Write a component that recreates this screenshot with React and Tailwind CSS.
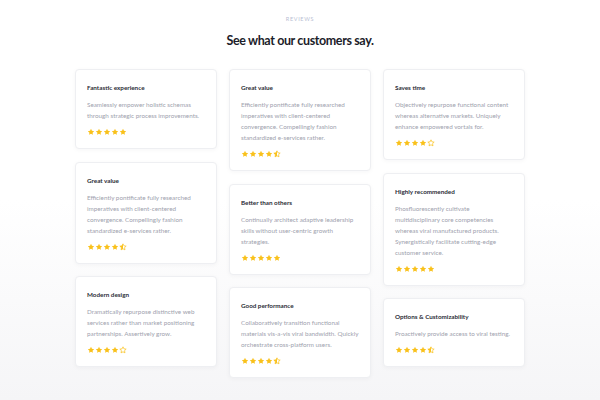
import React from 'react'

// Star glyph: full, half or empty
function Star({ kind, id }) {
  const d =
    'M12 2.5l2.9 6.1 6.6.8-4.9 4.6 1.3 6.6L12 17.3l-5.9 3.3 1.3-6.6-4.9-4.6 6.6-.8L12 2.5z'
  return (
    <svg viewBox="0 0 24 24" className="w-[8px] h-[8px]">
      {kind === 'half' && (
        <clipPath id={id}>
          <rect x="0" y="0" width="12" height="24" />
        </clipPath>
      )}
      {kind === 'full' && <path d={d} fill="#f9c11b" />}
      {kind === 'half' && <path d={d} fill="#f9c11b" clipPath={`url(#${id})`} />}
      {kind !== 'full' && (
        <path d={d} fill="none" stroke="#f9c11b" strokeWidth="2.2" strokeLinejoin="round" />
      )}
    </svg>
  )
}

function Rating({ value, uid }) {
  const stars = []
  for (let i = 1; i <= 5; i++) {
    let kind = 'empty'
    if (value >= i) kind = 'full'
    else if (value >= i - 0.5) kind = 'half'
    stars.push(<Star key={i} kind={kind} id={`${uid}-${i}`} />)
  }
  return <div className="flex items-center mt-[7px] h-[8px]">{stars}</div>
}

function ReviewCard({ review }) {
  return (
    <div className="bg-white rounded-[4px] border border-[#eeeff2] shadow-[0_1px_4px_rgba(20,20,40,0.04)] pt-[12px] pb-[12px] px-[11px]">
      <h3 className="text-[6.3px] leading-[11px] font-bold text-[#2b2c36]">{review.title}</h3>
      <p className="mt-[6px] text-[6.3px] leading-[11px] text-[#a0a2ae]">{review.text}</p>
      <Rating value={review.rating} uid={review.id} />
    </div>
  )
}

export default function App() {
  const columns = [
    [
      {
        id: 'a1',
        title: 'Fantastic experience',
        text: 'Seamlessly empower holistic schemas through strategic process improvements.',
        rating: 5,
      },
      {
        id: 'a2',
        title: 'Great value',
        text: 'Efficiently pontificate fully researched imperatives with client-centered convergence. Compellingly fashion standardized e-services rather.',
        rating: 4.5,
      },
      {
        id: 'a3',
        title: 'Modern design',
        text: 'Dramatically repurpose distinctive web services rather than market positioning partnerships. Assertively grow.',
        rating: 4,
      },
    ],
    [
      {
        id: 'b1',
        title: 'Great value',
        text: 'Efficiently pontificate fully researched imperatives with client-centered convergence. Compellingly fashion standardized e-services rather.',
        rating: 4.5,
      },
      {
        id: 'b2',
        title: 'Better than others',
        text: 'Continually architect adaptive leadership skills without user-centric growth strategies.',
        rating: 5,
      },
      {
        id: 'b3',
        title: 'Good performance',
        text: 'Collaboratively transition functional materials vis-a-vis viral bandwidth. Quickly orchestrate cross-platform users.',
        rating: 4.5,
      },
    ],
    [
      {
        id: 'c1',
        title: 'Saves time',
        text: 'Objectively repurpose functional content whereas alternative markets. Uniquely enhance empowered vortals for.',
        rating: 4,
      },
      {
        id: 'c2',
        title: 'Highly recommended',
        text: 'Phosfluorescently cultivate multidisciplinary core competencies whereas viral manufactured products. Synergistically facilitate cutting-edge customer service.',
        rating: 5,
      },
      {
        id: 'c3',
        title: 'Options & Customizability',
        text: 'Proactively provide access to viral testing.',
        rating: 4.5,
      },
    ],
  ]

  return (
    <section
      className="w-[600px] h-[400px] overflow-hidden bg-gradient-to-b from-white via-white to-[#f5f5f7]"
      style={{ fontFamily: 'Lato, "Open Sans", sans-serif' }}
    >
      {/* Header */}
      <div className="pt-[16px] text-center">
        <div className="text-[5.5px] leading-[7px] tracking-[0.12em] text-[#b9c0d3] uppercase">Reviews</div>
        <h2 className="mt-[9px] text-[12.5px] leading-[18px] font-bold tracking-[-0.03em] text-[#1c1d2a]">
          See what our customers say.
        </h2>
      </div>

      {/* Cards */}
      <div className="mt-[19px] mx-auto w-[450px] grid grid-cols-3 gap-x-[12px] items-start">
        {columns.map((col, i) => (
          <div key={i} className="flex flex-col gap-[12.5px]">
            {col.map((review) => (
              <ReviewCard key={review.id} review={review} />
            ))}
          </div>
        ))}
      </div>
    </section>
  )
}
